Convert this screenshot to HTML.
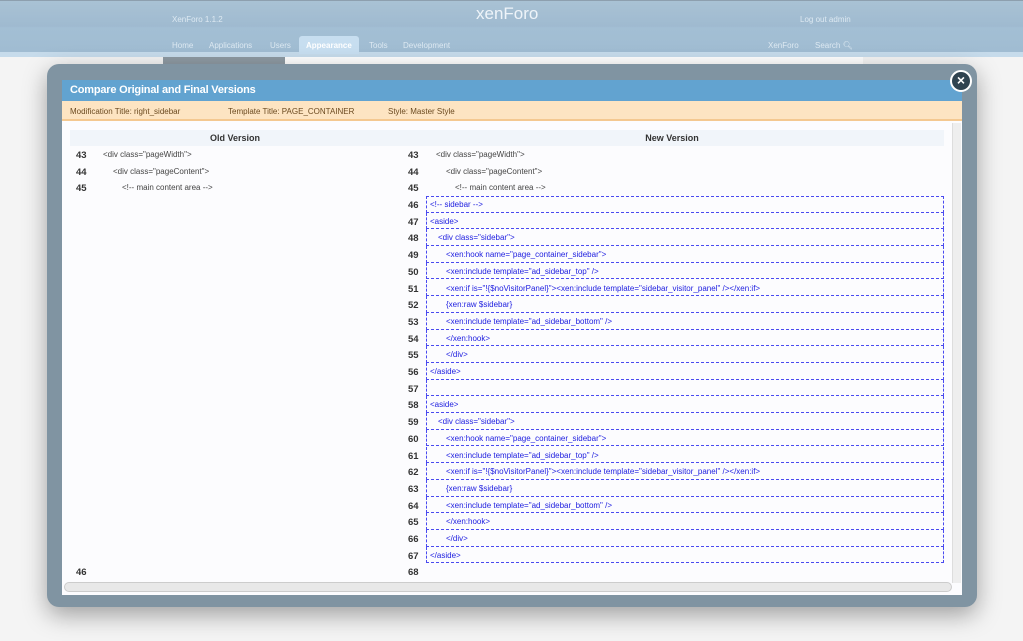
<!DOCTYPE html>
<html><head><meta charset="utf-8"><style>
*{margin:0;padding:0;box-sizing:border-box}
body{width:1023px;height:641px;overflow:hidden;background:#f4f4f4;font-family:"Liberation Sans",sans-serif;position:relative}
.hdr{position:absolute;left:0;top:0;width:1023px;height:52px;background:linear-gradient(#a9c2d4,#9fbad0 50%,#a3bfd4 52%,#a0bcd2);border-top:1px solid #8d9fae}
.hdr2{position:absolute;left:0;top:52px;width:1023px;height:5px;background:#c6dbeb}
.t{position:absolute;color:#dde9f2;font-size:8px;white-space:nowrap}
.modal{position:absolute;left:47px;top:64px;width:930px;height:543px;background:#8094a2;border-radius:12px;box-shadow:0 8px 24px rgba(0,0,0,.35)}
.title{position:absolute;left:62px;top:80px;width:900px;height:21px;background:#62a3d0;color:#fff;font-size:11px;font-weight:bold;padding:4px 0 0 8px;letter-spacing:-0.2px}
.info{position:absolute;left:62px;top:101px;width:900px;height:20px;background:#fde4c2;border-bottom:2px solid #f4c890;font-size:8px;color:#6b4a20;padding-top:6px}
.info span{position:absolute;top:6px}
.content{position:absolute;left:62px;top:121px;width:900px;height:474px;background:#fcfcfe}
.colh{position:absolute;top:130px;height:16px;background:#f1f5fa;font-size:9px;font-weight:bold;color:#333;text-align:center;padding-top:3px}
.n{position:absolute;font-size:9.5px;font-weight:bold;color:#333}
.c{position:absolute;font-size:8px;color:#444;white-space:nowrap}
.b{position:absolute;left:426px;width:518px;height:17px;border:1px dashed #4a4af0;border-top:none}
.bc{position:absolute;font-size:8px;color:#2020e0;white-space:nowrap}
.vs{position:absolute;left:952px;top:123px;width:9px;height:460px;background:#eee;border-left:1px solid #ddd}
.hs{position:absolute;left:64px;top:582px;width:888px;height:10px;background:#e8e8e8;border:1px solid #ccc;border-radius:5px}
.x{position:absolute;left:950px;top:70px;width:22px;height:22px;border-radius:50%;background:#2f4350;border:2px solid #fff;color:#fff;font-size:14px;font-weight:bold;text-align:center;line-height:17px}
</style></head><body>
<div class="hdr"></div><div class="hdr2"></div>
<div class="t" style="left:172px;top:15px">XenForo 1.1.2</div>
<div class="t" style="left:476px;top:4px;font-size:17px;color:#eef4f9">xenForo</div>
<div class="t" style="left:800px;top:15px">Log out admin</div>
<div class="t" style="left:172px;top:41px">Home</div>
<div class="t" style="left:209px;top:41px">Applications</div>
<div class="t" style="left:270px;top:41px">Users</div>
<div style="position:absolute;left:299px;top:36px;width:60px;height:18px;background:#c7def0;border-radius:3px 3px 0 0"></div>
<div class="t" style="left:306px;top:41px;color:#fff;font-weight:bold">Appearance</div>
<div class="t" style="left:369px;top:41px">Tools</div>
<div class="t" style="left:403px;top:41px">Development</div>
<div class="t" style="left:768px;top:41px">XenForo</div>
<div class="t" style="left:815px;top:41px">Search &#x1F50D;&#xFE0E;</div>
<div style="position:absolute;left:163px;top:57px;width:700px;height:10px;background:#fff"></div>
<div style="position:absolute;left:163px;top:57px;width:122px;height:8px;background:#8e9aa3"></div>
<div class="modal"></div>
<div class="title">Compare Original and Final Versions</div>
<div class="info"><span style="left:8px">Modification Title: right_sidebar</span><span style="left:166px">Template Title: PAGE_CONTAINER</span><span style="left:326px">Style: Master Style</span></div>
<div class="content"></div>
<div class="colh" style="left:70px;width:330px">Old Version</div>
<div class="colh" style="left:400px;width:544px">New Version</div>
<div class="vs"></div><div class="hs"></div>
<div class="x">×</div>
<div id="rows"></div>
<div class="n" style="left:76px;top:150px">43</div><div class="c" style="left:103px;top:150px">&lt;div class="pageWidth"&gt;</div>
<div class="n" style="left:76px;top:167px">44</div><div class="c" style="left:113px;top:167px">&lt;div class="pageContent"&gt;</div>
<div class="n" style="left:76px;top:183px">45</div><div class="c" style="left:122px;top:183px">&lt;!-- main content area --&gt;</div>
<div class="n" style="left:76px;top:567px">46</div>
<div class="n" style="left:408px;top:150px">43</div><div class="c" style="left:436px;top:150px">&lt;div class="pageWidth"&gt;</div>
<div class="n" style="left:408px;top:167px">44</div><div class="c" style="left:446px;top:167px">&lt;div class="pageContent"&gt;</div>
<div class="n" style="left:408px;top:183px">45</div><div class="c" style="left:455px;top:183px">&lt;!-- main content area --&gt;</div>
<div class="n" style="left:408px;top:567px">68</div>
<div style="position:absolute;left:426px;top:196px;width:518px;border-top:1px dashed #4a4af0"></div>
<script>
var L=[[0,'&lt;!-- sidebar --&gt;'],[0,'&lt;aside&gt;'],[1,'&lt;div class="sidebar"&gt;'],[2,'&lt;xen:hook name="page_container_sidebar"&gt;'],[2,'&lt;xen:include template="ad_sidebar_top" /&gt;'],[2,'&lt;xen:if is="!{$noVisitorPanel}"&gt;&lt;xen:include template="sidebar_visitor_panel" /&gt;&lt;/xen:if&gt;'],[2,'{xen:raw $sidebar}'],[2,'&lt;xen:include template="ad_sidebar_bottom" /&gt;'],[2,'&lt;/xen:hook&gt;'],[2,'&lt;/div&gt;'],[0,'&lt;/aside&gt;'],[0,''],
[0,'&lt;aside&gt;'],[1,'&lt;div class="sidebar"&gt;'],[2,'&lt;xen:hook name="page_container_sidebar"&gt;'],[2,'&lt;xen:include template="ad_sidebar_top" /&gt;'],[2,'&lt;xen:if is="!{$noVisitorPanel}"&gt;&lt;xen:include template="sidebar_visitor_panel" /&gt;&lt;/xen:if&gt;'],[2,'{xen:raw $sidebar}'],[2,'&lt;xen:include template="ad_sidebar_bottom" /&gt;'],[2,'&lt;/xen:hook&gt;'],[2,'&lt;/div&gt;'],[0,'&lt;/aside&gt;']];
var h='';for(var i=0;i<L.length;i++){var y=196+i*16.7;h+='<div class="b" style="top:'+y+'px;height:16.7px"></div><div class="n" style="left:408px;top:'+(y+4)+'px">'+(46+i)+'</div><div class="bc" style="left:'+(430+L[i][0]*8)+'px;top:'+(y+4)+'px">'+L[i][1]+'</div>';}
document.getElementById('rows').innerHTML=h;
</script>
</body></html>
